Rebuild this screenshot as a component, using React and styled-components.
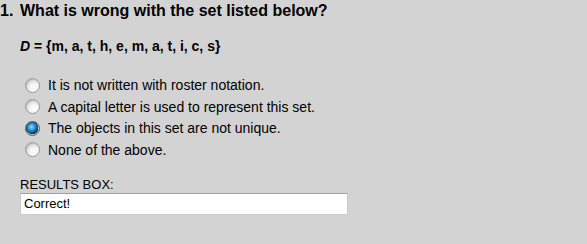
import React from 'react';
import styled, { createGlobalStyle } from 'styled-components';

const GlobalStyle = createGlobalStyle`
    html, body {
        margin: 0;
        padding: 0;
        background: #d3d3d3;
    }
    body {
        font-family: "Liberation Sans", Arial, sans-serif;
        color: #000;
    }
`;

const Page = styled.div`
    width: 587px;
    height: 244px;
    background: #d3d3d3;
    padding-top: 1px;
    box-sizing: border-box;
`;

const Question = styled.h1`
    margin: 0;
    font-size: 16px;
    font-weight: bold;
    line-height: 20px;
    display: flex;
`;

const Number = styled.span`
    width: 20px;
`;

const Body = styled.div`
    padding-left: 20px;
`;

const SetLine = styled.p`
    margin: 17px 0 0;
    font-size: 14px;
    font-weight: bold;
    line-height: 16px;
`;

const Options = styled.div`
    margin-top: 23px;
    padding-left: 5px;
    display: flex;
    flex-direction: column;
    gap: 5.5px;
`;

const Option = styled.label`
    display: flex;
    align-items: center;
    gap: 8px;
    height: 16px;
    font-size: 14px;
    line-height: 16px;
`;

const Radio = styled.input.attrs({ type: 'radio' })`
    appearance: none;
    margin: 0;
    width: 15px;
    height: 15px;
    border-radius: 50%;
    border: 1px solid #9a9a9a;
    box-sizing: border-box;
    background: radial-gradient(circle at 65% 70%, #ffffff 0%, #f4f4f4 35%, #d6d6d6 75%, #c2c2c2 100%);
    box-shadow: inset 1px 1px 1px rgba(0, 0, 0, 0.12);

    &:checked {
        border-color: #5a5a5a;
        background:
            radial-gradient(circle at 42% 38%, #9fdcff 0%, #2a95d8 30%, #0b5288 55%, transparent 60%),
            radial-gradient(circle at 50% 50%, #16283a 0%, #16283a 58%, #d8d8d8 66%, #f2f2f2 100%);
    }
`;

const ResultLabel = styled.div`
    margin-top: 19px;
    font-size: 13px;
    line-height: 16px;
`;

const ResultBox = styled.input`
    display: block;
    width: 328px;
    height: 22px;
    box-sizing: border-box;
    margin: 0;
    padding: 0 3px;
    font-family: "Liberation Sans", Arial, sans-serif;
    font-size: 13px;
    color: #000;
    background: #fff;
    border: 1px solid #c8cbd2;
    border-top-color: #a0a0a0;
    outline: none;
`;

const options = [
    'It is not written with roster notation.',
    'A capital letter is used to represent this set.',
    'The objects in this set are not unique.',
    'None of the above.',
];

export default function App() {
    return (
        <Page>
            <GlobalStyle />
            <Question>
                <Number>1.</Number>
                <span>What is wrong with the set listed below?</span>
            </Question>
            <Body>
                <SetLine>
                    <i>D</i> = {'{'}m, a, t, h, e, m, a, t, i, c, s{'}'}
                </SetLine>
                <Options>
                    {options.map((text, i) => (
                        <Option key={i}>
                            <Radio name="q1" defaultChecked={i === 2} />
                            {text}
                        </Option>
                    ))}
                </Options>
                <ResultLabel>RESULTS BOX:</ResultLabel>
                <ResultBox readOnly value="Correct!" />
            </Body>
        </Page>
    );
}
